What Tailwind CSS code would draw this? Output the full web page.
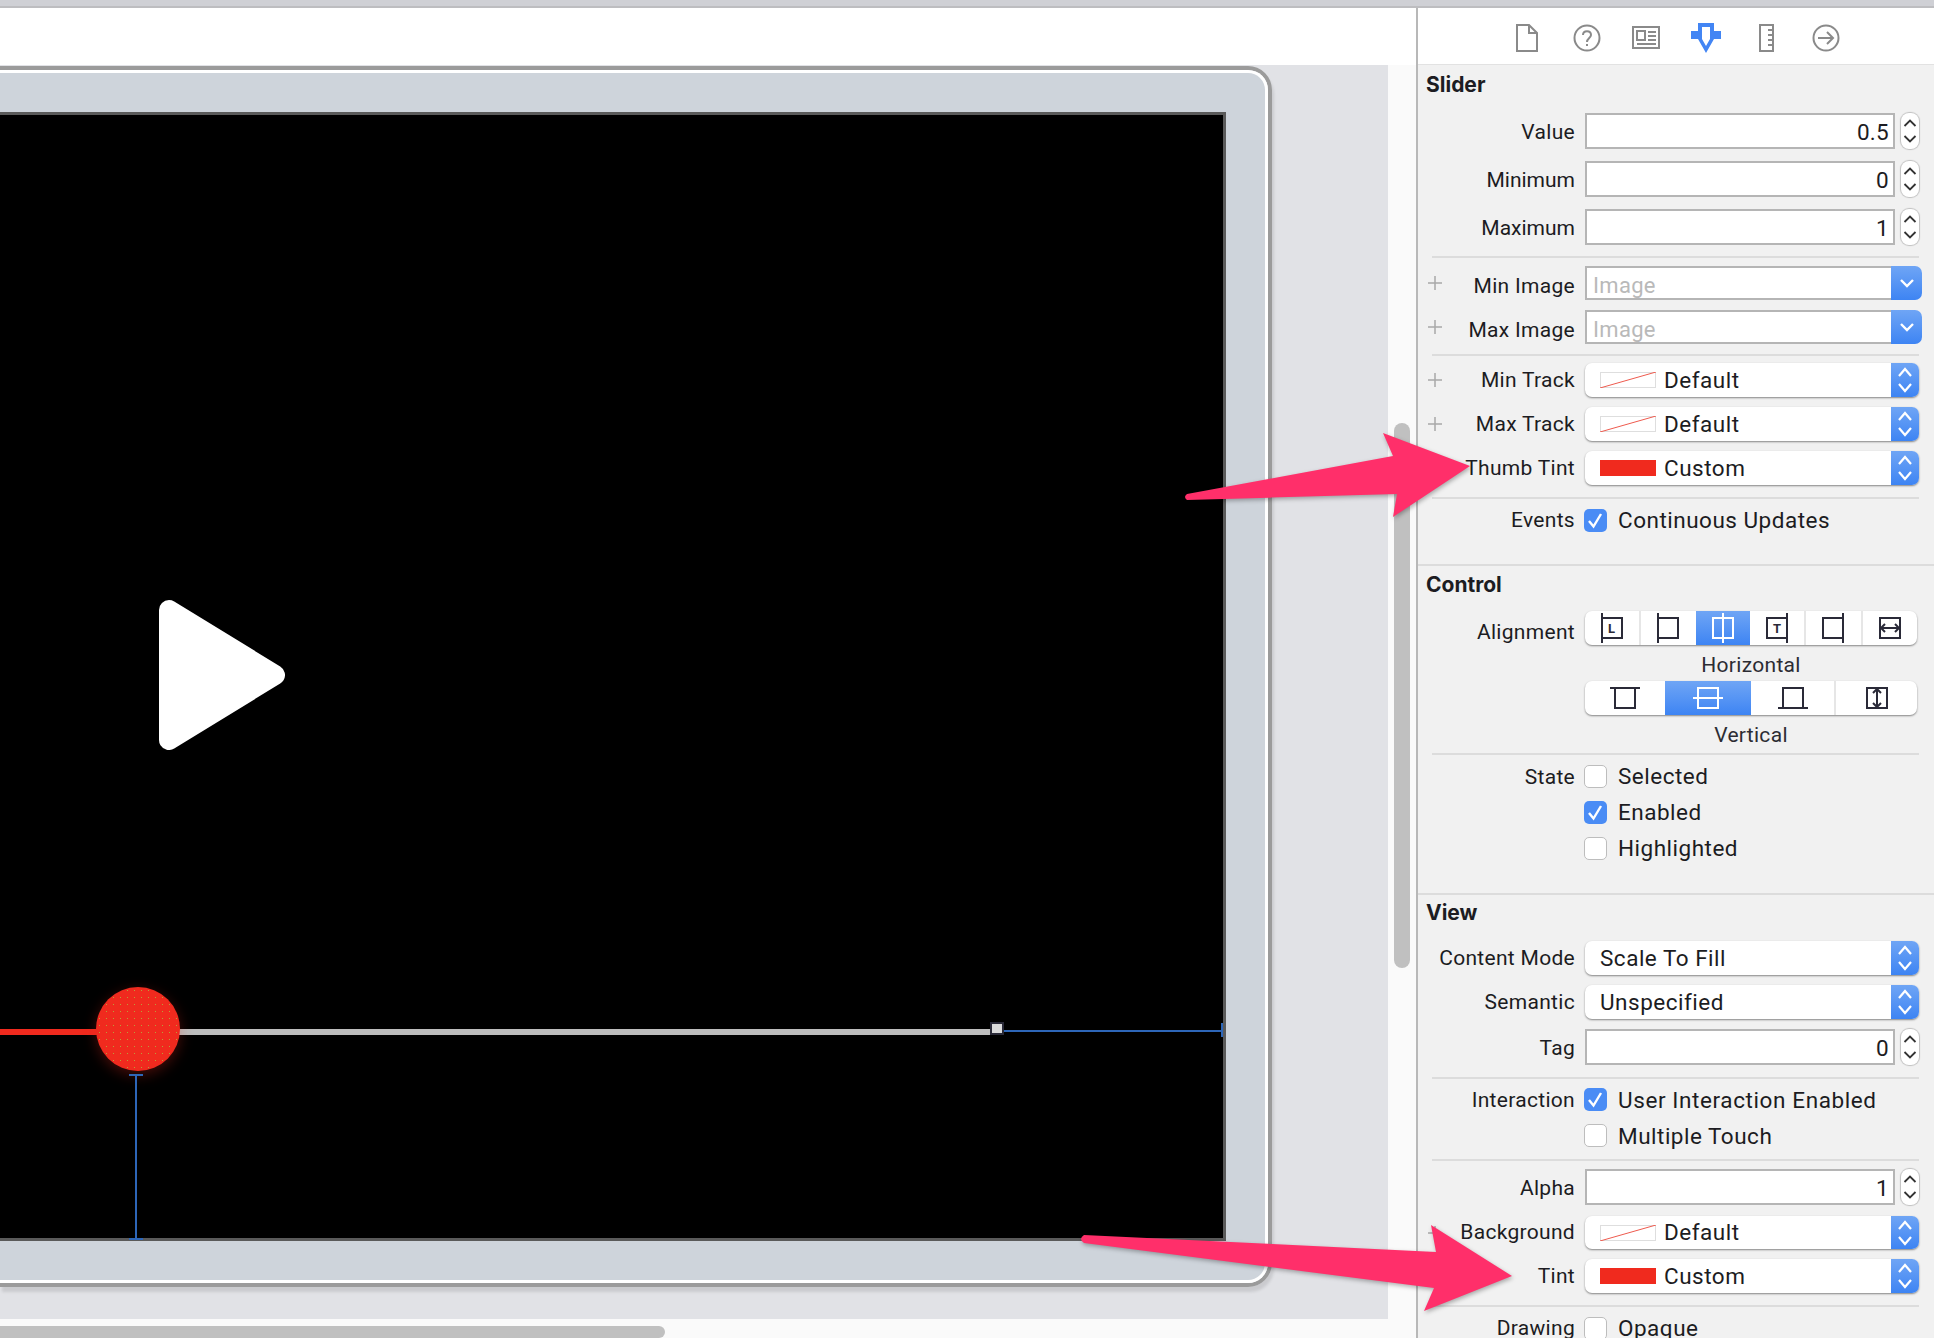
<!DOCTYPE html>
<html lang="en">

<head>
    <meta charset="UTF-8">
    <title>Slider attributes</title>
    <script src="https://cdn.jsdelivr.net/npm/@tailwindcss/browser@4"></script>
</head>

<body>
    <svg class="hidden">
        <symbol id="updown" viewBox="0 0 14 28"><path d="M1 10 7 3l6 7M1 18l6 7 6-7" fill="none" stroke="currentColor" stroke-width="2.2"/></symbol>
        <symbol id="stepper" viewBox="0 0 18 36"><path d="M3.500 13 9 7.500l5.500 5.500M3.500 23l5.500 5.500 5.500-5.500" fill="none" stroke="#333" stroke-width="1.800"/></symbol>
        <symbol id="down" viewBox="0 0 14 10"><path d="M1 2l6 6 6-6" fill="none" stroke="#fff" stroke-width="2.4"/></symbol>
        <symbol id="check" viewBox="0 0 23 23"><path d="M5 12l4.500 5.500L17 5" fill="none" stroke="#fff" stroke-width="2.400"/></symbol>
        <symbol id="plus" viewBox="0 0 14 14"><path d="M7 0v14M0 7h14" stroke="#a8a8a8" stroke-width="1.500"/></symbol>
        <symbol id="noswatch" viewBox="0 0 56 16"><rect x=".5" y=".5" width="55" height="15" fill="#fff" stroke="#dedede"/><path d="M0 16 56 0" stroke="#ee5a4e" stroke-width="1"/></symbol>
    </svg>

    <div class="relative w-[1934px] h-[1338px] overflow-hidden flex flex-col bg-[#fafafa] text-[21px] tracking-[0.3px] text-[#1c1c22] font-[family-name:Roboto,sans-serif]">
        <div class="h-[8px] shrink-0 bg-[#cfd0d5] border-b-2 border-[#bdbdc0]"></div>

        <div class="flex flex-1 min-h-0">
            <!-- canvas -->
            <div class="w-[1416px] shrink-0 flex flex-col">
                <div class="h-[57px] shrink-0 bg-white"></div>
                <div class="flex h-[1254px] shrink-0">
                    <div class="w-[1388px] h-full bg-[#e1e2e6] overflow-hidden">
                        <div class="mt-px w-[1272px] h-[1221px] flex flex-col border-[4px] border-l-0 border-[#9b9b9b] rounded-r-[24px] shadow-[2px_5px_3px_rgba(0,0,0,0.1)]">
                            <div class="h-full flex flex-col pt-[39px] pr-[39px] pb-[39px] bg-[#ced4db] border-[3px] border-l-0 border-white rounded-r-[20px]">
                                <div class="relative flex-1 bg-black border-[3px] border-l-0 border-[#5a5a5a]">
                                    <svg class="absolute left-[159px] top-[485px]" width="126" height="150" viewBox="0 0 126 150"><path d="M10 10 116 75 10 140Z" fill="#fff" stroke="#fff" stroke-width="20" stroke-linejoin="round"/></svg>
                                    <div class="absolute left-0 top-[914px] w-[100px] h-[6px] bg-[#f02a1e]"></div>
                                    <div class="absolute left-[178px] top-[914px] w-[812px] h-[6px] bg-[#bdbdbd]"></div>
                                    <div class="absolute left-[96px] top-[872px] w-[84px] h-[84px] rounded-full bg-[#f02a1e] bg-[radial-gradient(#b9a03a_0.6px,transparent_0.9px)] bg-[length:7px_7px] shadow-[0_4px_14px_rgba(240,42,30,0.3)]"></div>
                                    <div class="absolute left-[990px] top-[907px] w-[14px] h-[13px] bg-[#dcdcdc] border-2 border-[#2a2a38]"></div>
                                    <div class="absolute left-[1004px] top-[915px] w-[218px] h-[2px] bg-[#2d66b8]"></div>
                                    <div class="absolute left-[1221px] top-[908px] w-[2px] h-[14px] bg-[#2d66b8]"></div>
                                    <div class="absolute left-[135px] top-[960px] w-[2px] h-[164px] bg-[#2d66b8]"></div>
                                    <div class="absolute left-[129px] top-[959px] w-[14px] h-[2px] bg-[#2d66b8]"></div>
                                    <div class="absolute left-[129px] top-[1123px] w-[14px] h-[2px] bg-[#2d66b8]"></div>
                                </div>
                            </div>
                        </div>
                    </div>
                    <div class="relative w-[28px] h-full">
                        <div class="absolute left-[6px] top-[358px] w-[16px] h-[545px] rounded-full bg-[#c0c0c0]"></div>
                    </div>
                </div>
                <div class="mt-[7px] w-[665px] h-[16px] rounded-r-full bg-[#c0c0c0]"></div>
            </div>

            <div class="w-[2px] shrink-0 bg-[#b8b8b8]"></div>

            <!-- inspector -->
            <div class="w-[516px] shrink-0 flex flex-col bg-[#f1f1f1] *:shrink-0">
                <div class="h-[57px] pt-[3px] pl-[79px] flex items-center bg-white border-b border-[#e2e2e2] text-[#8a8a8a]">
                    <div class="w-[59.8px] flex justify-center"><svg width="22" height="28" viewBox="0 0 22 28" fill="none" stroke="currentColor" stroke-width="2"><path d="M1 1h12l8 8v18H1zM13 1v8h8"/></svg></div>
                    <div class="w-[59.8px] flex justify-center"><svg width="28" height="28" viewBox="0 0 28 28" fill="none" stroke="currentColor" stroke-width="2"><circle cx="14" cy="14" r="12.500"/><path d="M10 11c0-5 8-5 8 0 0 3-4 3-4 7"/><path d="M13 20h2v2h-2z" fill="currentColor" stroke="none"/></svg></div>
                    <div class="w-[59.8px] flex justify-center"><svg width="28" height="23" viewBox="0 0 28 23" fill="none" stroke="currentColor" stroke-width="2"><path d="M1 1h26v21H1zM5 5h8v9H5zM16 6h8M16 10h8M16 14h8M5 18h19"/></svg></div>
                    <div class="w-[59.8px] flex justify-center"><svg width="30" height="30" viewBox="0 0 30 30"><path fill-rule="evenodd" d="M7 0h16v8h7v8h-7L15 30 7 16H0V8h7zM11 4v12l4 7 4-7V4z" fill="#4285f4"/></svg></div>
                    <div class="w-[59.8px] flex justify-center"><svg width="15" height="28" viewBox="0 0 15 28" fill="none" stroke="currentColor" stroke-width="2"><path d="M1 1h13v26H1zM9 6h5M9 11h5M9 16h5M9 21h5"/></svg></div>
                    <div class="w-[59.8px] flex justify-center"><svg width="28" height="28" viewBox="0 0 28 28" fill="none" stroke="currentColor" stroke-width="2"><circle cx="14" cy="14" r="12.500"/><path d="M6 14h15M15 8l6 6-6 6"/></svg></div>
                </div>

                <!-- Slider -->
                <h2 class="mt-[8px] h-[24px] pl-[8px] leading-[24px] tracking-normal font-bold font-[family-name:Inter,sans-serif]">Slider</h2>
                <div class="mt-[16px] h-[36px] flex items-center">
                    <div class="w-[157px] pt-[4px] pl-[10px] flex items-center"><span class="ml-auto">Value</span></div>
                    <div class="ml-[10px] w-[310px] h-[36px] pr-[4px] text-right text-[22.5px] leading-[35px] bg-white border-2 border-[#b5b5b5]">0.5</div>
                    <div class="ml-[6px] w-[18px] h-[36px] bg-white rounded-[8px] shadow-[0_0_1px_1px_rgba(0,0,0,0.2)]"><svg width="18" height="36"><use href="#stepper"/></svg></div>
                </div>
                <div class="mt-[12px] h-[36px] flex items-center">
                    <div class="w-[157px] pt-[4px] pl-[10px] flex items-center"><span class="ml-auto tracking-normal">Minimum</span></div>
                    <div class="ml-[10px] w-[310px] h-[36px] pr-[4px] text-right text-[22.5px] leading-[35px] bg-white border-2 border-[#b5b5b5]">0</div>
                    <div class="ml-[6px] w-[18px] h-[36px] bg-white rounded-[8px] shadow-[0_0_1px_1px_rgba(0,0,0,0.2)]"><svg width="18" height="36"><use href="#stepper"/></svg></div>
                </div>
                <div class="mt-[12px] h-[36px] flex items-center">
                    <div class="w-[157px] pt-[4px] pl-[10px] flex items-center"><span class="ml-auto tracking-normal">Maximum</span></div>
                    <div class="ml-[10px] w-[310px] h-[36px] pr-[4px] text-right text-[22.5px] leading-[35px] bg-white border-2 border-[#b5b5b5]">1</div>
                    <div class="ml-[6px] w-[18px] h-[36px] bg-white rounded-[8px] shadow-[0_0_1px_1px_rgba(0,0,0,0.2)]"><svg width="18" height="36"><use href="#stepper"/></svg></div>
                </div>
                <div class="mt-[11px] ml-[14px] w-[487px] h-[2px] bg-[#dcdcdc]"></div>
                <div class="mt-[8px] h-[34px] flex items-center">
                    <div class="w-[157px] pl-[10px] flex items-center"><svg width="14" height="14"><use href="#plus"/></svg><span class="ml-auto pt-[8px]">Min Image</span></div>
                    <div class="ml-[10px] w-[337px] h-[34px] flex">
                        <div class="flex-1 pl-[6px] pt-[3px] leading-[30px] text-[22px] text-[#b9b9b9] bg-white border-2 border-r-0 border-[#b5b5b5]">Image</div>
                        <div class="w-[31px] flex items-center justify-center rounded-r-[7px] bg-linear-to-b from-[#6fa5f5] to-[#3d84f3]"><svg width="14" height="10"><use href="#down"/></svg></div>
                    </div>
                </div>
                <div class="mt-[10px] h-[34px] flex items-center">
                    <div class="w-[157px] pl-[10px] flex items-center"><svg width="14" height="14"><use href="#plus"/></svg><span class="ml-auto pt-[8px]">Max Image</span></div>
                    <div class="ml-[10px] w-[337px] h-[34px] flex">
                        <div class="flex-1 pl-[6px] pt-[3px] leading-[30px] text-[22px] text-[#b9b9b9] bg-white border-2 border-r-0 border-[#b5b5b5]">Image</div>
                        <div class="w-[31px] flex items-center justify-center rounded-r-[7px] bg-linear-to-b from-[#6fa5f5] to-[#3d84f3]"><svg width="14" height="10"><use href="#down"/></svg></div>
                    </div>
                </div>
                <div class="mt-[10px] ml-[14px] w-[487px] h-[2px] bg-[#dcdcdc]"></div>
                <div class="mt-[7px] h-[34px] flex items-center">
                    <div class="w-[157px] pl-[10px] flex items-center"><svg width="14" height="14"><use href="#plus"/></svg><span class="ml-auto pt-[2px]">Min Track</span></div>
                    <div class="ml-[10px] w-[334px] h-[34px] flex items-center pl-[15px] text-[22.5px] tracking-[0.5px] rounded-[7px] bg-white shadow-[0_1px_2px_rgba(0,0,0,0.45)]">
                        <svg class="shrink-0" width="56" height="16"><use href="#noswatch"/></svg><span class="ml-[8px] pt-[2px]">Default</span>
                        <div class="ml-auto w-[28px] h-full flex items-center justify-center rounded-r-[7px] text-white bg-linear-to-b from-[#6fa5f5] to-[#3d84f3]"><svg width="14" height="28"><use href="#updown"/></svg></div>
                    </div>
                </div>
                <div class="mt-[10px] h-[34px] flex items-center">
                    <div class="w-[157px] pl-[10px] flex items-center"><svg width="14" height="14"><use href="#plus"/></svg><span class="ml-auto pt-[2px]">Max Track</span></div>
                    <div class="ml-[10px] w-[334px] h-[34px] flex items-center pl-[15px] text-[22.5px] tracking-[0.5px] rounded-[7px] bg-white shadow-[0_1px_2px_rgba(0,0,0,0.45)]">
                        <svg class="shrink-0" width="56" height="16"><use href="#noswatch"/></svg><span class="ml-[8px] pt-[2px]">Default</span>
                        <div class="ml-auto w-[28px] h-full flex items-center justify-center rounded-r-[7px] text-white bg-linear-to-b from-[#6fa5f5] to-[#3d84f3]"><svg width="14" height="28"><use href="#updown"/></svg></div>
                    </div>
                </div>
                <div class="mt-[10px] h-[34px] flex items-center">
                    <div class="w-[157px] pl-[10px] flex items-center"><span class="ml-auto pt-[2px]">Thumb Tint</span></div>
                    <div class="ml-[10px] w-[334px] h-[34px] flex items-center pl-[15px] text-[22.5px] tracking-[0.5px] rounded-[7px] bg-white shadow-[0_1px_2px_rgba(0,0,0,0.45)]">
                        <div class="w-[56px] h-[16px] bg-[#f02a1e]"></div><span class="ml-[8px] pt-[2px]">Custom</span>
                        <div class="ml-auto w-[28px] h-full flex items-center justify-center rounded-r-[7px] text-white bg-linear-to-b from-[#6fa5f5] to-[#3d84f3]"><svg width="14" height="28"><use href="#updown"/></svg></div>
                    </div>
                </div>
                <div class="mt-[12px] ml-[14px] w-[487px] h-[2px] bg-[#dcdcdc]"></div>
                <div class="mt-[9px] h-[24px] flex items-center">
                    <div class="w-[157px] pt-[2px] text-right">Events</div>
                    <div class="ml-[9px] w-[23px] h-[23px] rounded-[5px] bg-[#4a8cf5]"><svg width="23" height="23"><use href="#check"/></svg></div>
                    <span class="ml-[11px] pt-[2px] text-[22.5px] tracking-[0.5px]">Continuous Updates</span>
                </div>
                <div class="mt-[32px] h-[2px] bg-[#dcdcdc]"></div>

                <!-- Control -->
                <h2 class="mt-[7px] h-[24px] pl-[8px] leading-[24px] tracking-normal font-bold font-[family-name:Inter,sans-serif]">Control</h2>
                <div class="mt-[14px] h-[34px] flex items-center">
                    <div class="w-[157px] pt-[9px] text-right">Alignment</div>
                    <div class="ml-[10px] w-[332px] h-[34px] flex overflow-hidden rounded-[7px] bg-white shadow-[0_1px_2px_rgba(0,0,0,0.45)] text-[#2a2a38]">
                        <div class="flex-1 flex items-center justify-center border-r-2 border-[#e6e6e6]"><svg width="32" height="32" viewBox="0 0 32 32" fill="none" stroke="currentColor" stroke-width="2"><path d="M6 1v30M6 6h20v20H6z"/><text x="12" y="21" font-size="13" font-weight="700" fill="currentColor" stroke="none" font-family="Roboto">L</text></svg></div>
                        <div class="flex-1 flex items-center justify-center"><svg width="32" height="32" viewBox="0 0 32 32" fill="none" stroke="currentColor" stroke-width="2"><path d="M6 1v30M6 6h20v20H6z"/></svg></div>
                        <div class="flex-1 flex items-center justify-center bg-linear-to-b from-[#6fa5f5] to-[#3d84f3] text-white"><svg width="32" height="32" viewBox="0 0 32 32" fill="none" stroke="currentColor" stroke-width="2"><path d="M16 1v30M6 6h20v20H6z"/></svg></div>
                        <div class="flex-1 flex items-center justify-center border-r-2 border-[#e6e6e6]"><svg width="32" height="32" viewBox="0 0 32 32" fill="none" stroke="currentColor" stroke-width="2"><path d="M26 1v30M6 6h20v20H6z"/><text x="12" y="21" font-size="13" font-weight="700" fill="currentColor" stroke="none" font-family="Roboto">T</text></svg></div>
                        <div class="flex-1 flex items-center justify-center border-r-2 border-[#e6e6e6]"><svg width="32" height="32" viewBox="0 0 32 32" fill="none" stroke="currentColor" stroke-width="2"><path d="M26 1v30M6 6h20v20H6z"/></svg></div>
                        <div class="flex-1 flex items-center justify-center"><svg width="32" height="32" viewBox="0 0 32 32" fill="none" stroke="currentColor" stroke-width="2"><path d="M6 6h20v20H6zM8 16h16M11 12l-4 4 4 4M21 12l4 4-4 4"/></svg></div>
                    </div>
                </div>
                <div class="mt-[8px] h-[24px] ml-[167px] w-[332px] text-center leading-[24px] text-[#2c2c33]">Horizontal</div>
                <div class="mt-[4px] ml-[167px] w-[332px] h-[34px] flex overflow-hidden rounded-[7px] bg-white shadow-[0_1px_2px_rgba(0,0,0,0.45)] text-[#2a2a38]">
                    <div class="w-[80px] flex items-center justify-center"><svg width="32" height="32" viewBox="0 0 32 32" fill="none" stroke="currentColor" stroke-width="2"><path d="M1 6h30M6 6h20v20H6z"/></svg></div>
                    <div class="w-[86px] flex items-center justify-center bg-linear-to-b from-[#6fa5f5] to-[#3d84f3] text-white"><svg width="32" height="32" viewBox="0 0 32 32" fill="none" stroke="currentColor" stroke-width="2"><path d="M1 16h30M6 6h20v20H6z"/></svg></div>
                    <div class="w-[85px] flex items-center justify-center border-r-2 border-[#e6e6e6]"><svg width="32" height="32" viewBox="0 0 32 32" fill="none" stroke="currentColor" stroke-width="2"><path d="M1 26h30M6 6h20v20H6z"/></svg></div>
                    <div class="flex-1 flex items-center justify-center"><svg width="32" height="32" viewBox="0 0 32 32" fill="none" stroke="currentColor" stroke-width="2"><path d="M6 6h20v20H6zM16 8v16M12 11l4-4 4 4M12 21l4 4 4-4"/></svg></div>
                </div>
                <div class="mt-[8px] h-[24px] ml-[167px] w-[332px] text-center leading-[24px] text-[#2c2c33]">Vertical</div>
                <div class="mt-[6px] ml-[14px] w-[487px] h-[2px] bg-[#dcdcdc]"></div>
                <div class="mt-[10px] h-[23px] flex items-center">
                    <div class="w-[157px] pt-[2px] text-right">State</div>
                    <div class="ml-[9px] w-[23px] h-[23px] rounded-[5px] bg-white border border-[#bdbdbd]"></div>
                    <span class="ml-[11px] text-[22.5px] tracking-[0.5px]">Selected</span>
                </div>
                <div class="mt-[13px] h-[23px] flex items-center">
                    <div class="w-[157px]"></div>
                    <div class="ml-[9px] w-[23px] h-[23px] rounded-[5px] bg-[#4a8cf5]"><svg width="23" height="23"><use href="#check"/></svg></div>
                    <span class="ml-[11px] text-[22.5px] tracking-[0.5px]">Enabled</span>
                </div>
                <div class="mt-[13px] h-[23px] flex items-center">
                    <div class="w-[157px]"></div>
                    <div class="ml-[9px] w-[23px] h-[23px] rounded-[5px] bg-white border border-[#bdbdbd]"></div>
                    <span class="ml-[11px] text-[22.5px] tracking-[0.5px]">Highlighted</span>
                </div>
                <div class="mt-[33px] h-[2px] bg-[#dcdcdc]"></div>

                <!-- View -->
                <h2 class="mt-[6px] h-[24px] pl-[8px] leading-[24px] tracking-normal font-bold font-[family-name:Inter,sans-serif]">View</h2>
                <div class="mt-[16px] h-[34px] flex items-center">
                    <div class="w-[157px] pt-[2px] text-right">Content Mode</div>
                    <div class="ml-[10px] w-[334px] h-[34px] flex items-center pl-[15px] text-[22.5px] tracking-[0.5px] rounded-[7px] bg-white shadow-[0_1px_2px_rgba(0,0,0,0.45)]">
                        <span class="pt-[2px]">Scale To Fill</span>
                        <div class="ml-auto w-[28px] h-full flex items-center justify-center rounded-r-[7px] text-white bg-linear-to-b from-[#6fa5f5] to-[#3d84f3]"><svg width="14" height="28"><use href="#updown"/></svg></div>
                    </div>
                </div>
                <div class="mt-[10px] h-[34px] flex items-center">
                    <div class="w-[157px] pt-[2px] text-right">Semantic</div>
                    <div class="ml-[10px] w-[334px] h-[34px] flex items-center pl-[15px] text-[22.5px] tracking-[0.5px] rounded-[7px] bg-white shadow-[0_1px_2px_rgba(0,0,0,0.45)]">
                        <span class="pt-[2px]">Unspecified</span>
                        <div class="ml-auto w-[28px] h-full flex items-center justify-center rounded-r-[7px] text-white bg-linear-to-b from-[#6fa5f5] to-[#3d84f3]"><svg width="14" height="28"><use href="#updown"/></svg></div>
                    </div>
                </div>
                <div class="mt-[10px] h-[36px] flex items-center">
                    <div class="w-[157px] pt-[4px] text-right">Tag</div>
                    <div class="ml-[10px] w-[310px] h-[36px] pr-[4px] text-right text-[22.5px] leading-[35px] bg-white border-2 border-[#b5b5b5]">0</div>
                    <div class="ml-[6px] w-[18px] h-[36px] bg-white rounded-[8px] shadow-[0_0_1px_1px_rgba(0,0,0,0.2)]"><svg width="18" height="36"><use href="#stepper"/></svg></div>
                </div>
                <div class="mt-[12px] ml-[14px] w-[487px] h-[2px] bg-[#dcdcdc]"></div>
                <div class="mt-[9px] h-[23px] flex items-center">
                    <div class="w-[157px] pt-[2px] text-right">Interaction</div>
                    <div class="ml-[9px] w-[23px] h-[23px] rounded-[5px] bg-[#4a8cf5]"><svg width="23" height="23"><use href="#check"/></svg></div>
                    <span class="ml-[11px] pt-[2px] text-[22.5px] tracking-[0.6px]">User Interaction Enabled</span>
                </div>
                <div class="mt-[13px] h-[23px] flex items-center">
                    <div class="w-[157px]"></div>
                    <div class="ml-[9px] w-[23px] h-[23px] rounded-[5px] bg-white border border-[#bdbdbd]"></div>
                    <span class="ml-[11px] pt-[2px] text-[22.5px] tracking-[0.5px]">Multiple Touch</span>
                </div>
                <div class="mt-[12px] ml-[14px] w-[487px] h-[2px] bg-[#dcdcdc]"></div>
                <div class="mt-[8px] h-[36px] flex items-center">
                    <div class="w-[157px] pt-[4px] text-right">Alpha</div>
                    <div class="ml-[10px] w-[310px] h-[36px] pr-[4px] text-right text-[22.5px] leading-[35px] bg-white border-2 border-[#b5b5b5]">1</div>
                    <div class="ml-[6px] w-[18px] h-[36px] bg-white rounded-[8px] shadow-[0_0_1px_1px_rgba(0,0,0,0.2)]"><svg width="18" height="36"><use href="#stepper"/></svg></div>
                </div>
                <div class="mt-[11px] h-[33px] flex items-center">
                    <div class="w-[157px] pl-[10px] flex items-center"><svg width="14" height="14"><use href="#plus"/></svg><span class="ml-auto">Background</span></div>
                    <div class="ml-[10px] w-[334px] h-[33px] flex items-center pl-[15px] text-[22.5px] tracking-[0.5px] rounded-[7px] bg-white shadow-[0_1px_2px_rgba(0,0,0,0.45)]">
                        <svg class="shrink-0" width="56" height="16"><use href="#noswatch"/></svg><span class="ml-[8px]">Default</span>
                        <div class="ml-auto w-[28px] h-full flex items-center justify-center rounded-r-[7px] text-white bg-linear-to-b from-[#6fa5f5] to-[#3d84f3]"><svg width="14" height="28"><use href="#updown"/></svg></div>
                    </div>
                </div>
                <div class="mt-[10px] h-[34px] flex items-center">
                    <div class="w-[157px] pt-[2px] text-right">Tint</div>
                    <div class="ml-[10px] w-[334px] h-[34px] flex items-center pl-[15px] text-[22.5px] tracking-[0.5px] rounded-[7px] bg-white shadow-[0_1px_2px_rgba(0,0,0,0.45)]">
                        <div class="w-[56px] h-[16px] bg-[#f02a1e]"></div><span class="ml-[8px] pt-[2px]">Custom</span>
                        <div class="ml-auto w-[28px] h-full flex items-center justify-center rounded-r-[7px] text-white bg-linear-to-b from-[#6fa5f5] to-[#3d84f3]"><svg width="14" height="28"><use href="#updown"/></svg></div>
                    </div>
                </div>
                <div class="mt-[12px] ml-[14px] w-[487px] h-[2px] bg-[#dcdcdc]"></div>
                <div class="mt-[10px] h-[23px] flex items-center">
                    <div class="w-[157px] text-right">Drawing</div>
                    <div class="ml-[9px] w-[23px] h-[23px] rounded-[5px] bg-white border border-[#bdbdbd]"></div>
                    <span class="ml-[11px] text-[22.5px] tracking-[0.5px]">Opaque</span>
                </div>
            </div>
        </div>

        <!-- annotation arrows drawn over the screenshot -->
        <svg class="absolute left-0 top-0 pointer-events-none drop-shadow-[1px_2px_2px_rgba(0,0,0,0.3)]" width="1934" height="1338" viewBox="0 0 1934 1338">
            <path d="M1187 494 1393 456 1383 433 1470 466 1393 517 1397 494 1187 500Q1183 497 1187 494Z" fill="#ff2f6a"/>
            <path d="M1084 1235 1436 1252 1431 1225 1512 1276 1424 1311 1434 1288 1084 1243Q1078 1239 1084 1235Z" fill="#ff2f6a"/>
        </svg>
    </div>
</body>

</html>
